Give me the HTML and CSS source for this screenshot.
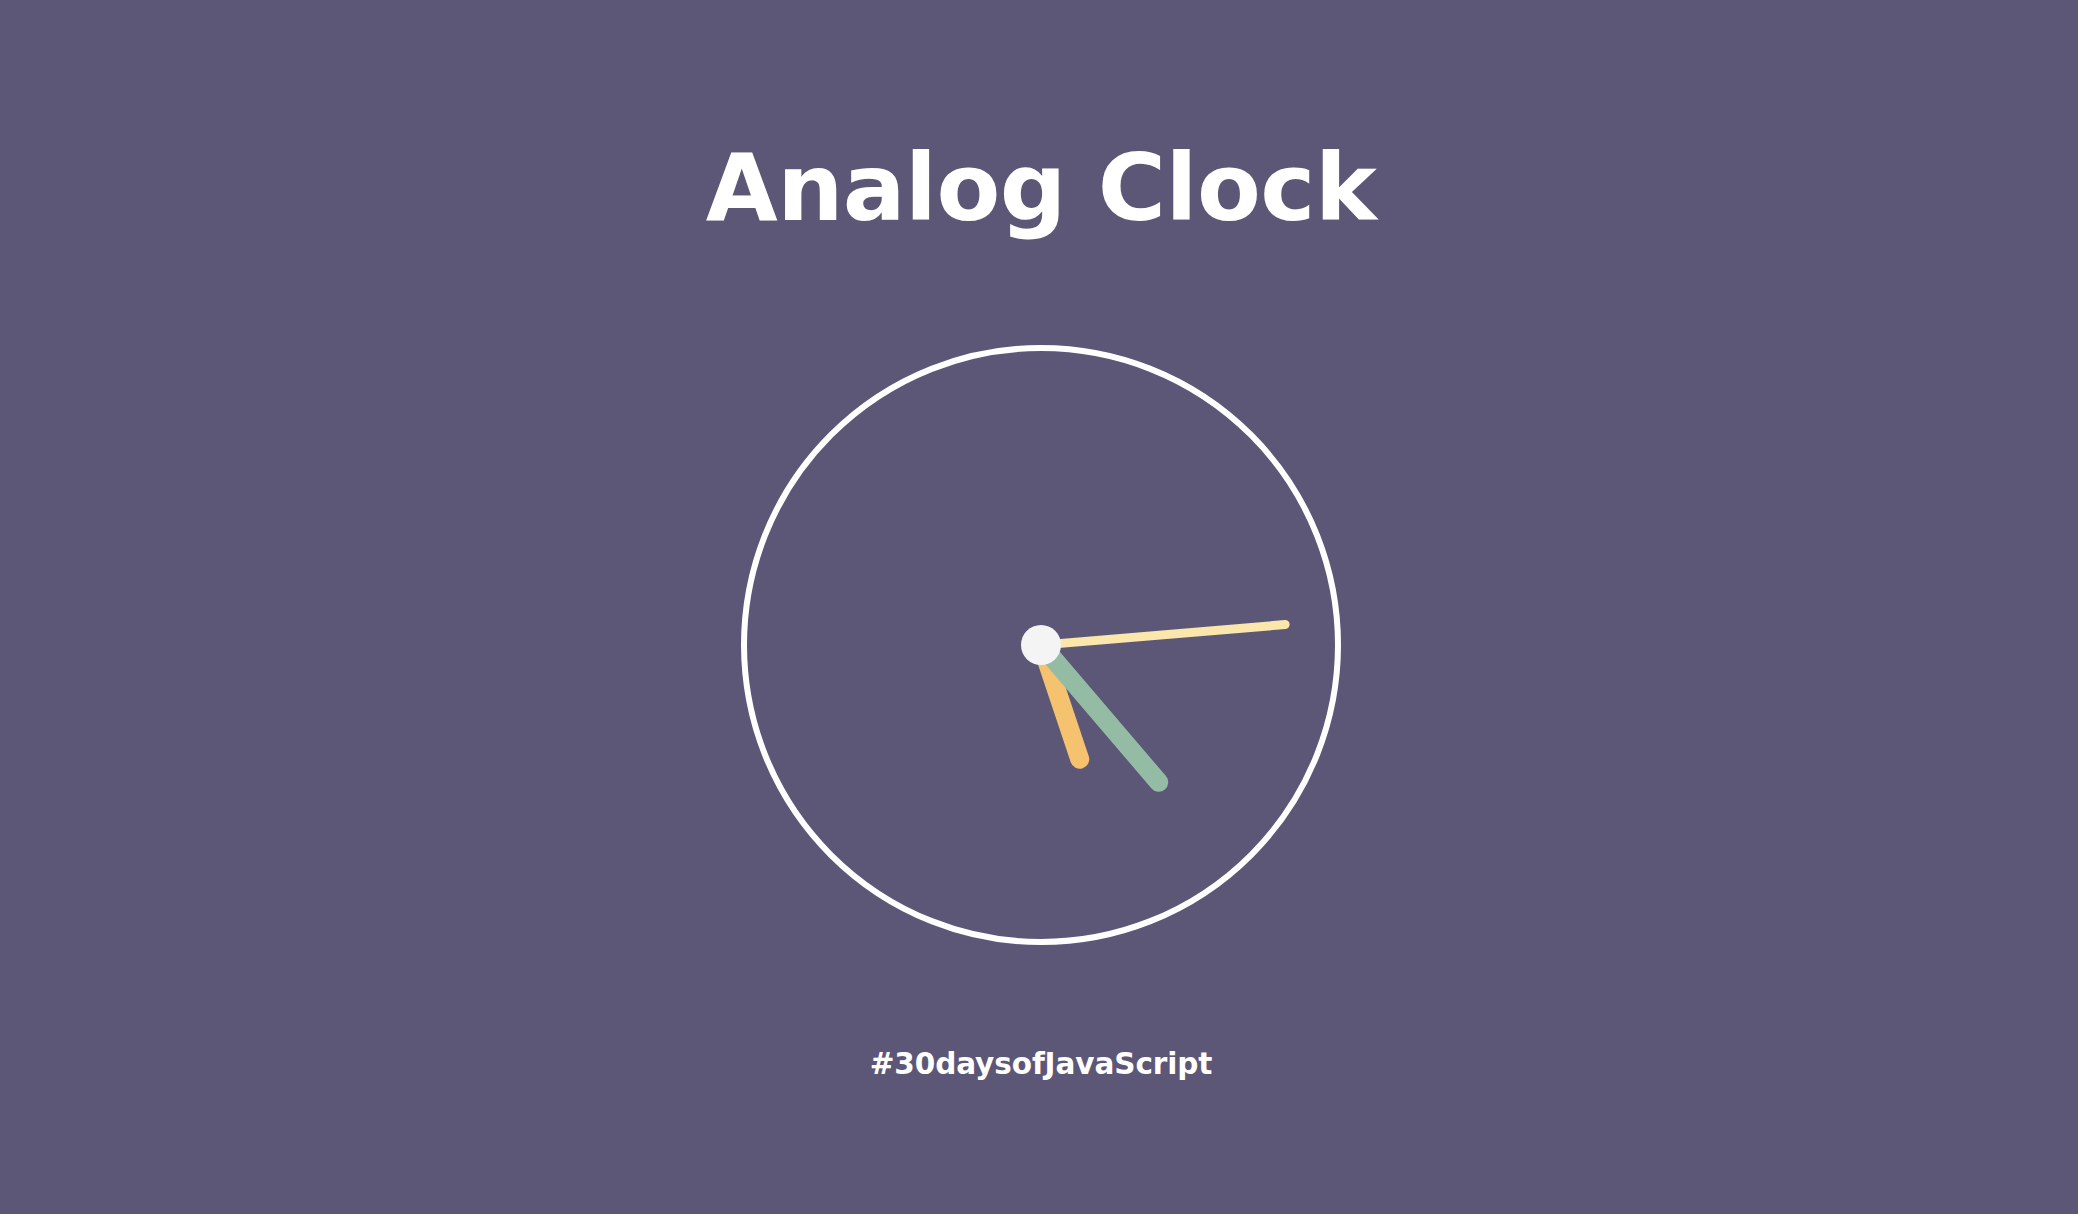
FILE: index.html
```html
<!DOCTYPE html>
<html lang="en">
<head>
<meta charset="utf-8">
<title>Analog Clock</title>
<link rel="stylesheet" href="styles.css">
</head>
<body>
  <main class="page">
    <h1 class="title">Analog Clock</h1>
    <div class="clock">
      <div class="hand hand-hour"></div>
      <div class="hand hand-minute"></div>
      <div class="hand hand-second"></div>
      <div class="center-dot"></div>
    </div>
    <p class="tag">#30daysofJavaScript</p>
  </main>
</body>
</html>
```

FILE: styles.css
```css
html, body {
  margin: 0;
  padding: 0;
  background: #5d5777;
}

.page {
  display: flex;
  flex-direction: column;
  align-items: center;
  padding-top: 142px;
  padding-left: 4px;
  min-height: 100vh;
  box-sizing: border-box;
  font-family: "DejaVu Sans", "Liberation Sans", sans-serif;
  color: #ffffff;
}

.title {
  margin: 0;
  font-size: 93px;
  line-height: 1;
  font-weight: 700;
  letter-spacing: -0.5px;
}

.clock {
  position: relative;
  width: 600px;
  height: 600px;
  margin-top: 110px;
  box-sizing: border-box;
  border: 6px solid #ffffff;
  border-radius: 50%;
}

.hand {
  position: absolute;
  left: 50%;
  bottom: 50%;
  transform-origin: 50% 100%;
}

.hand-hour {
  width: 19px;
  height: 130px;
  margin-left: -9.5px;
  background: #f5c26f;
  border-radius: 10px;
  transform: rotate(161.5deg);
}

.hand-minute {
  width: 19px;
  height: 190px;
  margin-left: -9.5px;
  background: #94bca5;
  border-radius: 10px;
  transform: rotate(139.5deg);
}

.hand-second {
  width: 9px;
  height: 249px;
  margin-left: -4.5px;
  background: #fbe6ab;
  border-radius: 5px;
  transform: rotate(85.2deg);
}

.center-dot {
  position: absolute;
  left: 50%;
  top: 50%;
  width: 40px;
  height: 40px;
  margin: -20px 0 0 -20px;
  border-radius: 50%;
  background: #f4f4f4;
}

.tag {
  margin: 105px 0 0;
  font-size: 29.5px;
  line-height: 1;
  font-weight: 700;
  letter-spacing: -0.1px;
}
```
